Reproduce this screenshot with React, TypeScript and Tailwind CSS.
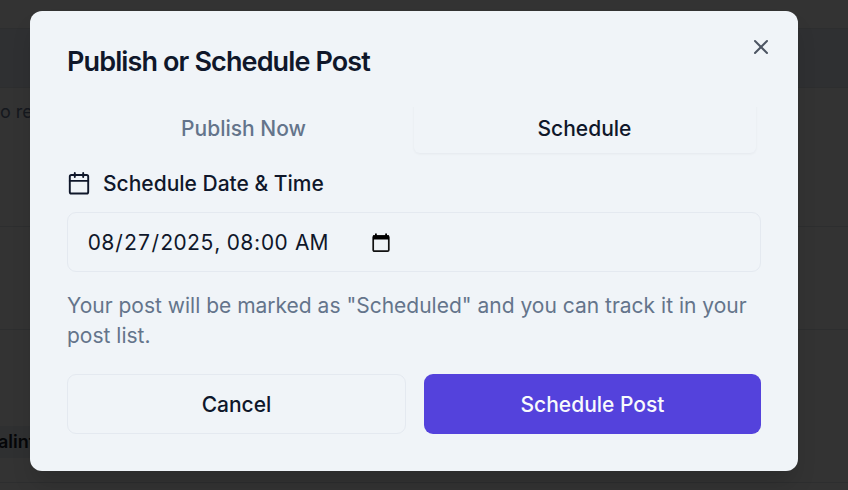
import { X } from "lucide-react";

function PageBehind() {
  return (
    <div className="flex h-full flex-col text-[18px] leading-[27px]">
      <div className="h-[29px] shrink-0 border-b border-[#2d2e2f]" />
      <div className="h-[59px] shrink-0 border-b border-[#2d2e2f] bg-[#2f3032]" />
      <div className="h-[139px] shrink-0 border-b border-[#2d2e2f] pt-[10px] whitespace-nowrap text-[#15181e]">
        o results
      </div>
      <div className="h-[103px] shrink-0 border-b border-[#2d2e2f]" />
      <div className="flex h-[153px] shrink-0 items-start border-b border-[#2d2e2f] pt-[96px]">
        <span className="-ml-[2px] h-[32px] w-[140px] bg-[#2f3031] leading-[32px] font-semibold text-[#050608]">
          alinta
        </span>
      </div>
    </div>
  );
}

function CalendarIcon() {
  return (
    <svg
      className="h-6 w-6 shrink-0"
      viewBox="0 0 24 24"
      fill="none"
      stroke="currentColor"
      strokeWidth="1.9"
      strokeLinecap="round"
      strokeLinejoin="round"
    >
      <rect x="2.8" y="3" width="18.4" height="18.5" rx="1.6" />
      <path d="M7.8 1v4M16.2 1v4M2.8 8.9h18.4" />
    </svg>
  );
}

function PickerIcon() {
  return (
    <svg className="h-[20px] w-[18px] shrink-0" viewBox="0 0 18 20">
      <rect x="1.2" y="3" width="15.6" height="15.2" rx="1.2" fill="none" stroke="#111" strokeWidth="1.7" />
      <path d="M1 2.2H17V6.5H1Z M3 0.6H4.8V3H3Z M13.2 0.6H15V3H13.2Z" fill="#000" />
    </svg>
  );
}

function DateFields() {
  return (
    <span className="-ml-[0.5px] block w-[285px] tracking-[-0.2px] whitespace-pre tabular-nums">
      <span className="px-[1px]">08</span>/<span className="px-[1px]">27</span>/
      <span className="px-[1px]">2025</span>
      {", "}
      <span className="px-[1px]">08</span>:<span className="px-[1px]">00</span>{" "}
      <span className="px-[1px]">AM</span>
    </span>
  );
}

export default function App() {
  return (
    <div className="relative h-[490px] w-[848px] overflow-hidden bg-[#333333] font-['Inter',sans-serif]">
      <PageBehind />
      <div
        role="dialog"
        className="absolute top-[10.5px] left-[30px] flex h-[460.8px] w-[768px] flex-col rounded-[12px] bg-[#f0f4f8] px-[37px] pt-[37.5px] text-[21px] leading-[30px] text-[#0f172a] shadow-[0_15px_22px_-4px_rgba(0,0,0,0.15)]"
      >
        <h2 className="h-[27px] text-[27px] leading-[27px] font-semibold tracking-[-0.88px]">
          Publish or Schedule Post
        </h2>
        <div className="mt-[30px] grid h-[48px] grid-cols-2 pr-[5px] pl-[5px] font-medium">
          <button className="pl-[1px] text-[#64748b]">Publish Now</button>
          <button className="rounded-b-[6px] bg-[#f0f4f8] pr-[1px] shadow-[0_1px_3px_0_rgba(15,23,42,0.05)] [clip-path:inset(2px_-5px_-6px_-5px)]">
            Schedule
          </button>
        </div>
        <div className="mt-[16px] flex h-[30px] items-center gap-3 font-medium">
          <CalendarIcon />
          Schedule Date &amp; Time
        </div>
        <div className="mt-[13.3px] flex h-[60px] shrink-0 items-center rounded-[9px] border border-[#e4e9f0] px-[19px] pt-[1px]">
          <DateFields />
          <PickerIcon />
        </div>
        <p className="mt-[18.7px] text-[#64748b]">
          Your post will be marked as "Scheduled" and you can track it in your post list.
        </p>
        <div className="mt-[23.4px] grid h-[60px] shrink-0 grid-cols-[339px_337px] gap-[18px] font-medium">
          <button className="rounded-[9px] border border-[#e4e9f0] pt-[1px]">Cancel</button>
          <button className="rounded-[9px] bg-[#5442dc] pt-[1px] text-[#f8fafc]">Schedule Post</button>
        </div>
        <button aria-label="Close" className="absolute top-[24.5px] right-[25px] text-[#4d5563]">
          <X size={24} strokeWidth={2} />
        </button>
      </div>
    </div>
  );
}
